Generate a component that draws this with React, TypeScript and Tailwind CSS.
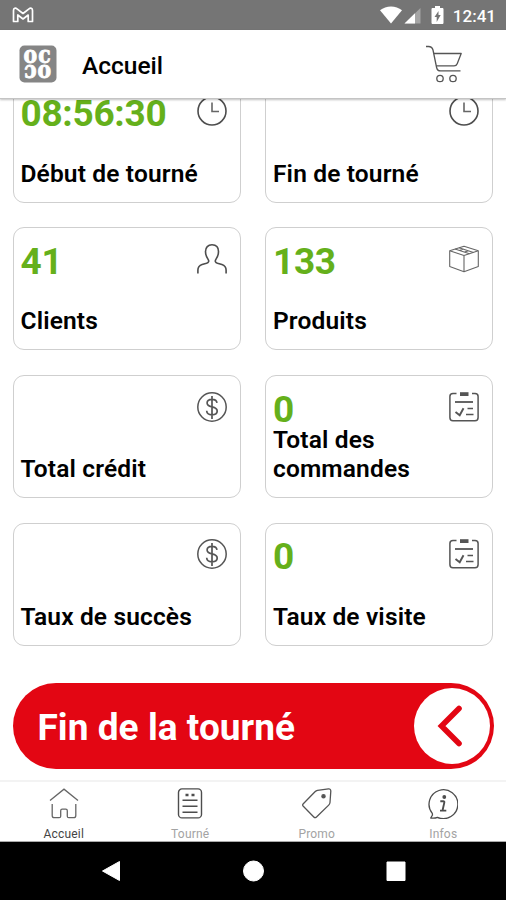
import type { ReactNode } from "react";

const ClockIcon = () => (
  <svg width="30" height="30" viewBox="0 0 30 30" fill="none" stroke="#4d4d4d" strokeWidth="1.6">
    <circle cx="15" cy="15" r="14" />
    <path d="M15 6.500v9h7" stroke="#666" />
  </svg>
);

const UserIcon = () => (
  <svg width="30" height="30" viewBox="0 0 30 30" fill="none" stroke="#4d4d4d" strokeWidth="1.6">
    <path d="M.9 29.5v-3.4c0-3 1.5-4.8 4.2-5.7l4.4-1.2c2.2-.7 2.8-2 1.6-3.8-1.7-2.5-2.6-4.8-2.6-7.8C8.500 3.300 11 .8 15 .8s6.500 2.500 6.500 6.800c0 3-.9 5.300-2.600 7.800-1.200 1.800-.6 3.100 1.600 3.800l4.400 1.200c2.700.9 4.200 2.700 4.200 5.700v3.400" />
  </svg>
);

const BoxIcon = () => (
  <svg width="30" height="30" viewBox="0 0 30 30" fill="none" stroke="#666" strokeWidth="1.1" strokeLinejoin="round">
    <path d="M.7 6.800 15 2.200l14.300 4.600v15.700L15 27.700.7 22.500zM.7 6.800 15 11.400l14.300-4.600M15 11.400v16.300" />
    <path d="m6 5.100 14.500 4.600M10 3.800l14.500 4.600M10.500 6.500l4-1.500M15.500 8.100l4-1.400" />
  </svg>
);

const DollarIcon = () => (
  <svg width="30" height="30" viewBox="0 0 30 30" fill="none" stroke="#555" strokeWidth="1.5">
    <circle cx="15" cy="15" r="14.200" />
    <path d="M20 10.800C19.700 8.600 17.700 7.300 15 7.300c-2.900 0-4.900 1.400-4.900 3.700 0 2.400 1.900 3.200 4.900 3.900s5.200 1.600 5.200 4.100c0 2.400-2.200 3.800-5.200 3.800s-5.200-1.500-5.300-4M15 4v23" strokeWidth="1.700" />
  </svg>
);

const ChecklistIcon = () => (
  <svg width="30" height="30" viewBox="0 0 30 30" fill="none" stroke="#555" strokeWidth="1.500">
    <path d="M7.500 1.500H4C2 1.500.9 2.600.9 4.500v21c0 2 1.100 3.300 3.100 3.300h22c2 0 3.100-1.300 3.100-3.300v-21c0-1.900-1.100-3-3.100-3h-3" />
    <path d="M11 2.100h8.500" strokeWidth="3.800" />
    <path d="M6 10h18" strokeWidth="1.800" />
    <path d="m6.500 20 4.200 3.200 3.800-7" strokeWidth="1.900" />
    <path d="M18.500 16.500H24M17 22.500h7.500" />
  </svg>
);

const CartIcon = () => (
  <svg width="38" height="39" viewBox="0 0 38 39" fill="none" stroke="#555" strokeWidth="1.300" strokeLinejoin="round">
    <path d="M1 1.500h2.500c2.600 0 3.900 1.200 4.500 3.500l3.600 17.500c.5 2.400 1.600 3.400 3.900 3.400h20" />
    <path d="M8.700 8.500h27.500l-4 10.200c-.6 1.500-1.500 2.100-3.100 2.100H11.200" />
    <circle cx="15" cy="33.500" r="3.200" />
    <circle cx="28" cy="33.500" r="3.200" />
  </svg>
);

const Logo = () => (
  <svg className="overflow-visible" width="38" height="38" viewBox="0 0 38 38">
    <rect x=".5" y=".5" width="37" height="37" rx="5" fill="#858585" />
    <text
      fill="#fff"
      stroke="#fff"
      strokeWidth=".8"
      fontFamily="'DejaVu Serif', serif"
      fontWeight="700"
      fontSize="22"
      transform="scale(.93 1.1)"
    >
      <tspan x="4.800" y="16.200">o</tspan>
      <tspan x="20.600" y="16.200">c</tspan>
      <tspan x="5.600" y="30">ɔ</tspan>
      <tspan x="19.800" y="30">o</tspan>
    </text>
  </svg>
);

const HomeIcon = () => (
  <svg width="30" height="31" viewBox="0 0 30 31" fill="none" stroke="#666" strokeWidth="1.300">
    <path d="M1 12.500 15 1.200l14 11.300" />
    <path d="M3.200 16v11.500c0 1.500.7 2.200 2.200 2.200h4.800c1 0 1.500-.5 1.500-1.500v-5.500c0-1 .5-1.500 1.500-1.500h3.600c1 0 1.500.5 1.500 1.500v5.500c0 1 .5 1.500 1.500 1.500h4.800c1.500 0 2.200-.7 2.200-2.200V16" />
  </svg>
);

const ListIcon = () => (
  <svg width="30" height="31" viewBox="0 0 30 31" fill="none" stroke="#4d4d4d" strokeWidth="1.400">
    <rect x="3.500" y=".9" width="23" height="29" rx="3.500" />
    <path d="M10.500 7h3M16.500 7h3" strokeWidth="2.600" />
    <path d="M7.500 12.300h15M7.500 18.300h15M7.500 24.300h15" strokeWidth="1.600" />
  </svg>
);

const TagIcon = () => (
  <svg width="30" height="31" viewBox="0 0 30 31" fill="none" stroke="#555" strokeWidth="1.300" strokeLinejoin="round">
    <path d="M15.500 2.300 26.500.9c1.500-.1 2.300.7 2.300 2.200L28 14.500c-.1 1.100-.5 1.800-1.300 2.600L14.500 29c-1 .9-1.800.9-2.700 0L1.300 18.300c-.9-.9-.9-1.700 0-2.600L13 3.700c.8-.8 1.400-1.200 2.500-1.400z" />
    <circle cx="21.500" cy="8.300" r="1.600" fill="#555" />
  </svg>
);

const InfoIcon = () => (
  <svg width="30" height="31" viewBox="0 0 30 31" fill="none" stroke="#4d4d4d" strokeWidth="1.300" strokeLinejoin="round">
    <path d="M9.500 29.300a14.400 14.400 0 1 0-5.200-4l.2 1.700-1.800 3c2.600.4 4.800.2 6.800-.7z" />
    <circle cx="16.300" cy="9" r="1.900" fill="#4d4d4d" stroke="none" />
    <path d="M12.300 13.200h2.900c1 0 1.300.5 1.100 1.400l-1.500 6.600c-.2 1 .1 1.400 1 1.400h2.500M12 22.600h4" strokeWidth="1.900" />
  </svg>
);

type Stat = { label: string; value?: string; icon: ReactNode };

const stats: Stat[] = [
  { label: "Début de tourné", value: "08:56:30", icon: <ClockIcon /> },
  { label: "Fin de tourné", icon: <ClockIcon /> },
  { label: "Clients", value: "41", icon: <UserIcon /> },
  { label: "Produits", value: "133", icon: <BoxIcon /> },
  { label: "Total crédit", icon: <DollarIcon /> },
  { label: "Total des commandes", value: "0", icon: <ChecklistIcon /> },
  { label: "Taux de succès", icon: <DollarIcon /> },
  { label: "Taux de visite", value: "0", icon: <ChecklistIcon /> },
];

const tabs = [
  { label: "Accueil", icon: <HomeIcon />, active: true },
  { label: "Tourné", icon: <ListIcon />, active: false },
  { label: "Promo", icon: <TagIcon />, active: false },
  { label: "Infos", icon: <InfoIcon />, active: false },
];

function StatCard({ label, value, icon }: Stat) {
  return (
    <div className="flex h-[123px] flex-col justify-between rounded-[11px] border-[1.5px] border-[#cfcfcf] pt-[15.500px] pr-[13px] pb-[13.500px] pl-[7px]">
      <div className="flex h-[30px] items-start justify-between">
        <span className="mt-[1px] text-[37px] leading-[34px] font-bold tracking-[-0.3px] text-[#65b01b]">{value}</span>
        {icon}
      </div>
      <span className="text-[24.500px] leading-[28.6px] font-semibold tracking-[0.15px] text-black">{label}</span>
    </div>
  );
}

export default function App() {
  return (
    <div className="flex h-[900px] w-[506px] flex-col overflow-hidden bg-white font-[Roboto,sans-serif]">
      {/* status bar */}
      <div className="flex h-[30px] shrink-0 items-center bg-[#757575] pr-[10px] pl-[12px]">
        <svg width="22" height="16" viewBox="0 0 22 16" fill="none" stroke="#fff" strokeWidth="1.700" strokeLinejoin="round">
          <path d="M1.500 3.500C1.500 1 3.500.6 5 1.800l6 4.700 6-4.700c1.500-1.200 3.500-.8 3.500 1.700v11h-4.300V8L11 12 5.800 8v6.500H1.500z" />
        </svg>
        <div className="ml-auto flex items-center">
          <svg width="64" height="18" viewBox="0 0 64 18" fill="#fff">
            <path d="M0 4.200C6-.9 16-.9 22 4.200L11 17.500z" />
            <path d="M40.500 2v15.500H24.500z" fillOpacity=".35" />
            <path d="M35 7.300v10.200H24.500z" />
            <path d="M55 0h5v2h2.200c.8 0 1.300.5 1.300 1.300v13.400c0 .8-.5 1.300-1.300 1.300h-9.400c-.8 0-1.300-.5-1.300-1.300V3.300c0-.8.500-1.300 1.300-1.300H55z" />
            <path d="M58.500 5v4h2.200l-4 7v-5h-2.200z" fill="#757575" />
          </svg>
          <span className="mt-[2px] ml-[9px] text-[17px] leading-[28px] font-medium text-white">12:41</span>
        </div>
      </div>

      <header className="z-10 flex h-[69px] shrink-0 items-center border-b border-[#c4c4c4] bg-white pr-[43px] pl-[19px] shadow-[0_1px_2px_rgba(0,0,0,0.25)]">
        <Logo />
        <h1 className="mt-[4px] ml-[25px] text-[24.500px] font-medium text-black">Accueil</h1>
        <div className="ml-auto">
          <CartIcon />
        </div>
      </header>

      <main className="flex min-h-0 flex-1 flex-col overflow-hidden">
        {/* list is scrolled, first row sits partly under the header */}
        <div className="-mt-[19.300px] grid shrink-0 grid-cols-2 gap-x-[24.500px] gap-y-[24.700px] pr-[13px] pl-[12.500px]">
          {stats.map((stat) => (
            <StatCard key={stat.label} {...stat} />
          ))}
        </div>
        <button className="mr-[12px] ml-[12.500px] mt-[37.300px] flex h-[86px] shrink-0 items-center justify-between rounded-full bg-[#e30613] pr-[4.500px] pl-[25px]">
          <span className="mt-[3px] text-[37px] font-bold tracking-[0.05px] text-white">Fin de la tourné</span>
          <span className="flex size-[76px] items-center justify-center rounded-full bg-white pr-[4px]">
            <svg width="26" height="42" viewBox="0 0 26 42" fill="none" stroke="#e30613" strokeWidth="5.600" strokeLinecap="round">
              <path d="M22 3.500 4.500 21 22 38.500" />
            </svg>
          </span>
        </button>
      </main>

      <nav className="grid h-[62px] shrink-0 grid-cols-4 border-t-2 border-b-[1px] border-t-[#f3f3f3] border-b-[#aaa] bg-white">
        {tabs.map((tab) => (
          <div key={tab.label} className="flex flex-col items-center pt-[6px] pl-[1px]">
            {tab.icon}
            <span className={`mt-[7px] text-[12px] leading-[16px] tracking-[0.2px] ${tab.active ? "text-[#444]" : "text-[#a3a3a3]"}`}>
              {tab.label}
            </span>
          </div>
        ))}
      </nav>

      {/* android buttons */}
      <div className="flex h-[58px] shrink-0 justify-center bg-black">
        <svg width="306" height="58" viewBox="0 0 306 58" fill="#fff" stroke="#fff" strokeLinejoin="round">
          <path d="M2.500 29 19.500 19.500v19z" />
          <circle cx="153.500" cy="29" r="10" />
          <rect x="287" y="20" width="18" height="18.500" />
        </svg>
      </div>
    </div>
  );
}
